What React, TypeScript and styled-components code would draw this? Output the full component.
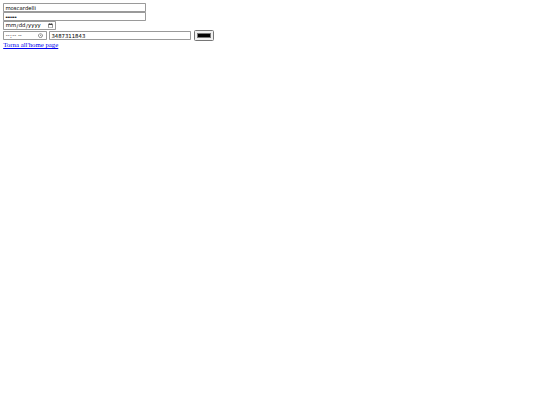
import React from "react";
import styled, { createGlobalStyle } from "styled-components";

const Global = createGlobalStyle`
  body {
    margin: 0;
    font-family: "Liberation Serif", "Times New Roman", serif;
    background: #fff;
  }
  input { font-family: "DejaVu Sans", "Liberation Sans", sans-serif; font-size: 13.33px; }
`;

const Page = styled.div`
  zoom: 0.4;
  padding: 8px;
`;

const Form = styled.form`
  display: block;
  margin: 0;
`;

const Line = styled.div`
  display: flex;
  align-items: center;
`;

const Field = styled.input<{ $w: number; $gap?: number }>`
  box-sizing: border-box;
  width: ${(p) => p.$w}px;
  height: 22.5px;
  margin: 0 0 0 ${(p) => p.$gap ?? 0}px;
  border: 1px solid #9a9a9a;
  border-radius: 2px;
  padding: 1px 3px;
  color: #000;
  background: #fff;

  &[type="password"] {
    font-family: "Liberation Sans", Arial, sans-serif;
  }
`;

const ColorField = styled.input`
  box-sizing: border-box;
  width: 50px;
  height: 27px;
  margin: 0 0 0 7px;
`;

const BackLink = styled.a`
  display: inline-block;
  color: #0000ee;
  font-size: 17px;
  text-decoration: underline;
  font-family: "Liberation Serif", "Times New Roman", serif;
`;

export default function App() {
  return (
    <>
      <Global />
      <Page>
        <Form onSubmit={(e) => e.preventDefault()}>
          <Line>
            <Field $w={357} type="text" defaultValue="moscardelli" />
          </Line>
          <Line>
            <Field $w={357} type="password" defaultValue="mosca1" />
          </Line>
          <Line>
            <Field $w={133} type="date" />
          </Line>
          <Line>
            <Field $w={110} type="time" />
            <Field $w={355} $gap={5} type="tel" defaultValue="3487311843" />
            <ColorField type="color" defaultValue="#000000" />
          </Line>
        </Form>
        <BackLink href="#">Torna all'home page</BackLink>
      </Page>
    </>
  );
}
